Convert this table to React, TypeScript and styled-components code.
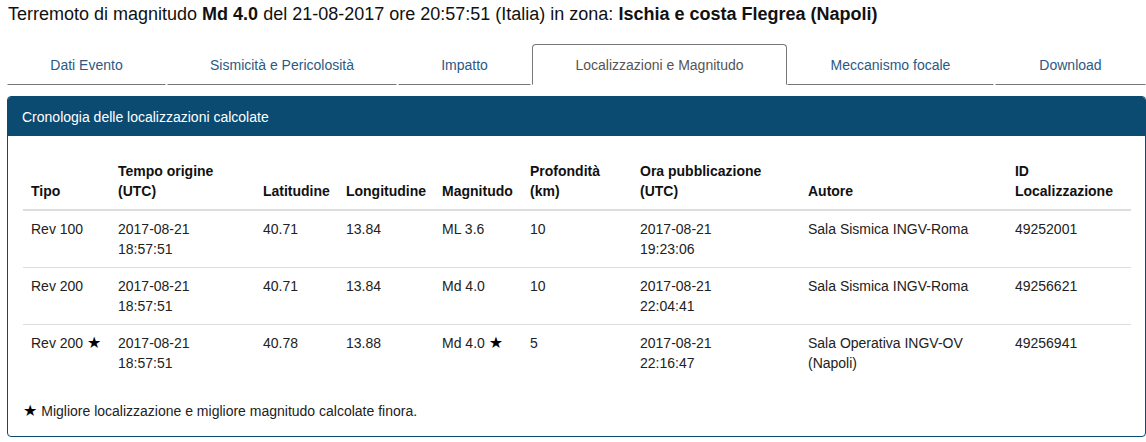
import React from "react";
import styled, { createGlobalStyle } from "styled-components";

const Global = createGlobalStyle`
  html, body { margin: 0; padding: 0; background: #fff; }
  body { font-family: "Liberation Sans", Arial, sans-serif; font-size: 14px; line-height: 1.42857; color: #333; }
  * { box-sizing: border-box; }
`;

const Page = styled.div`
  padding: 0 0 0 7px;
  width: 1146px;
`;

const Title = styled.h1`
  margin: 0;
  padding: 3px 0 0 1px;
  height: 44px;
  font-size: 18px;
  font-weight: normal;
  line-height: 22px;
  color: #111;
  b { font-weight: bold; }
`;

const Tabs = styled.ul`
  display: flex;
  list-style: none;
  margin: 0 0 11px 0;
  padding: 0;
`;

const Tab = styled.li<{ $w: number; $active?: boolean }>`
  flex: 0 0 ${(p) => p.$w}px;
  height: 41px;
  display: flex;
  align-items: center;
  justify-content: center;
  color: ${(p) => (p.$active ? "#555" : "#2a5a85")};
  font-size: 14px;
  border-radius: 4px 4px 0 0;
  border: 1px solid ${(p) => (p.$active ? "#777" : "transparent")};
  border-bottom: 1px solid ${(p) => (p.$active ? "transparent" : "#777")};
  margin-right: ${(p) => (p.$active ? 0 : 1)}px;
  padding-top: 2px;
`;

const Panel = styled.section`
  width: 1139px;
  border: 1px solid #0b4a71;
  border-radius: 4px;
  overflow: hidden;
`;

const PanelHead = styled.div`
  background: #0b4a71;
  color: #fff;
  height: 39px;
  padding: 10px 14px;
  font-size: 14px;
  line-height: 20px;
`;

const PanelBody = styled.div`
  padding: 17px 15px 14px;
`;

const Table = styled.table`
  width: 1108px;
  border-collapse: collapse;
  margin-bottom: 21px;
  color: #222;
  th, td {
    padding: 8px;
    text-align: left;
    line-height: 20px;
  }
  th {
    vertical-align: bottom;
    font-weight: bold;
    color: #111;
    border-bottom: 2px solid #ddd;
  }
  td {
    vertical-align: top;
  }
  tbody tr + tr td { border-top: 1px solid #ddd; }
`;

const Star = styled.span`
  font-family: "DejaVu Sans", sans-serif;
  font-size: 16px;
  line-height: 16px;
  color: #000;
`;

const Note = styled.p`
  margin: 0;
  color: #222;
`;

const tabs = [
  { t: "Dati Evento", w: 159 },
  { t: "Sismicità e Pericolosità", w: 230 },
  { t: "Impatto", w: 133 },
  { t: "Localizzazioni e Magnitudo", w: 255, active: true },
  { t: "Meccanismo focale", w: 207 },
  { t: "Download", w: 151 },
];

const cols = [87, 145, 83, 96, 88, 110, 168, 207, 124];

const rows = [
  ["Rev 100", "2017-08-21\n18:57:51", "40.71", "13.84", "ML 3.6", "10", "2017-08-21\n19:23:06", "Sala Sismica INGV-Roma", "49252001"],
  ["Rev 200", "2017-08-21\n18:57:51", "40.71", "13.84", "Md 4.0", "10", "2017-08-21\n22:04:41", "Sala Sismica INGV-Roma", "49256621"],
  ["Rev 200 *", "2017-08-21\n18:57:51", "40.78", "13.88", "Md 4.0 *", "5", "2017-08-21\n22:16:47", "Sala Operativa INGV-OV\n(Napoli)", "49256941"],
];

const Cell = ({ s }: { s: string }) => {
  const starred = s.endsWith(" *");
  const text = starred ? s.slice(0, -2) : s;
  return (
    <>
      {text.split("\n").map((x, i) => (
        <React.Fragment key={i}>
          {i > 0 && <br />}
          {x}
        </React.Fragment>
      ))}
      {starred && (
        <>
          {" "}
          <Star>★</Star>
        </>
      )}
    </>
  );
};

export default function App() {
  return (
    <>
      <Global />
      <Page>
        <Title>
          Terremoto di magnitudo <b>Md 4.0</b> del 21-08-2017 ore 20:57:51 (Italia) in zona: <b>Ischia e costa Flegrea (Napoli)</b>
        </Title>
        <Tabs>
          {tabs.map((t) => (
            <Tab key={t.t} $w={t.w} $active={t.active}>
              {t.t}
            </Tab>
          ))}
        </Tabs>
        <Panel>
          <PanelHead>Cronologia delle localizzazioni calcolate</PanelHead>
          <PanelBody>
            <Table>
              <colgroup>
                {cols.map((w, i) => (
                  <col key={i} style={{ width: w }} />
                ))}
              </colgroup>
              <thead>
                <tr>
                  <th>Tipo</th>
                  <th>Tempo origine<br />(UTC)</th>
                  <th>Latitudine</th>
                  <th>Longitudine</th>
                  <th>Magnitudo</th>
                  <th>Profondità<br />(km)</th>
                  <th>Ora pubblicazione<br />(UTC)</th>
                  <th>Autore</th>
                  <th>ID<br />Localizzazione</th>
                </tr>
              </thead>
              <tbody>
                {rows.map((r, i) => (
                  <tr key={i}>
                    {r.map((c, j) => (
                      <td key={j}>
                        <Cell s={c} />
                      </td>
                    ))}
                  </tr>
                ))}
              </tbody>
            </Table>
            <Note>
              <Star>★</Star> Migliore localizzazione e migliore magnitudo calcolate finora.
            </Note>
          </PanelBody>
        </Panel>
      </Page>
    </>
  );
}
